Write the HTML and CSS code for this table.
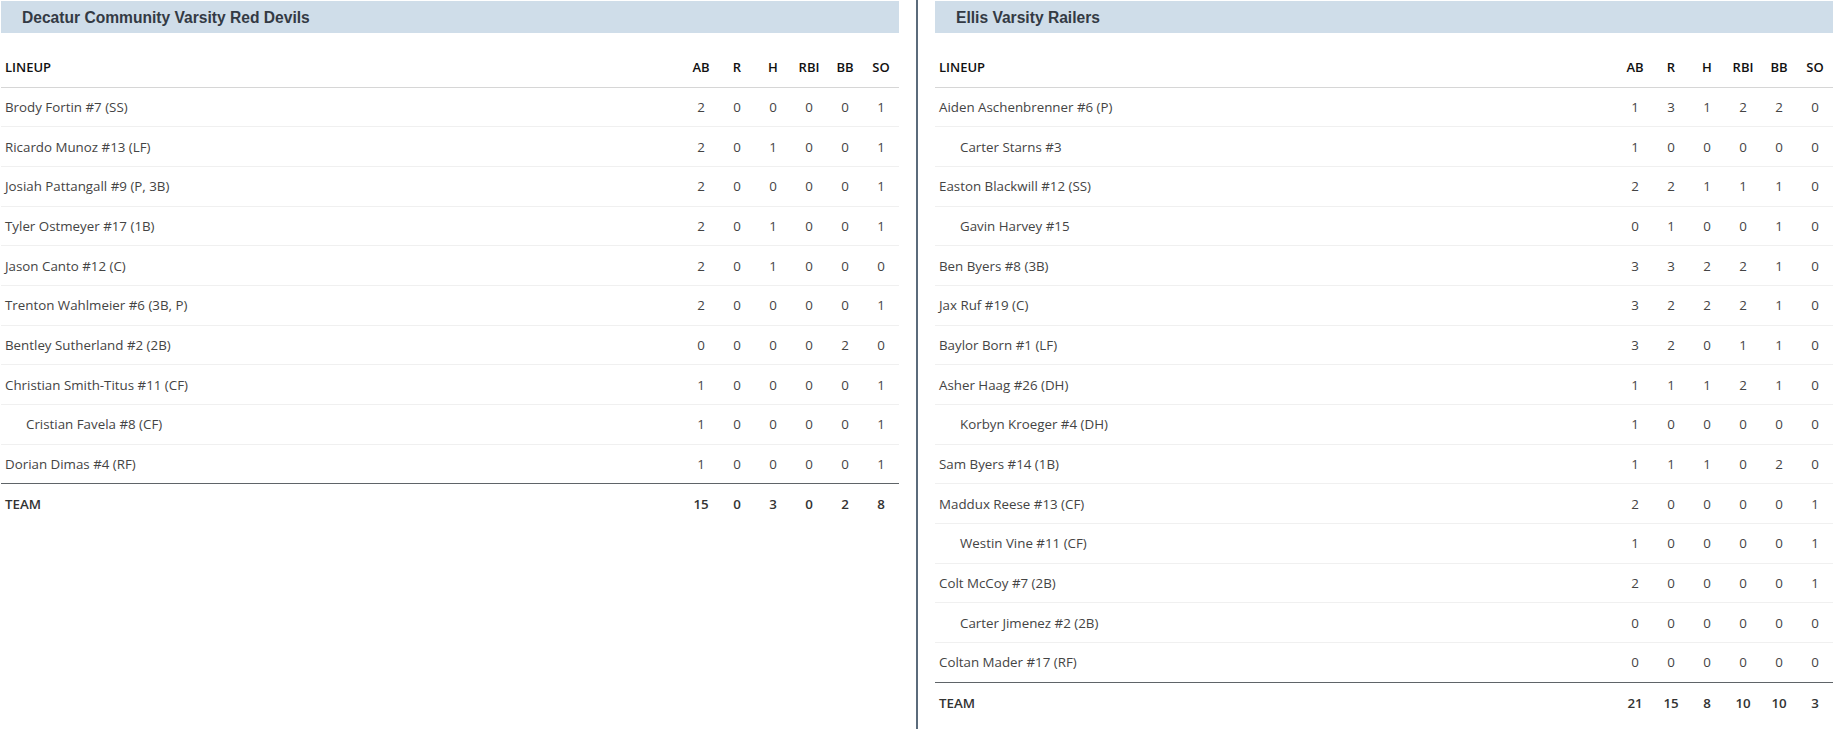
FILE: index.html
```html
<!DOCTYPE html>
<html>
<head>
<meta charset="utf-8">
<link rel="stylesheet" href="styles.css">
</head>
<body>
<div class="boxscore">
  <section class="team">
    <h2 class="team-name">Decatur Community Varsity Red Devils</h2>
    <table class="lineup">
      <thead>
        <tr><th class="name">LINEUP</th><th>AB</th><th>R</th><th>H</th><th>RBI</th><th>BB</th><th>SO</th></tr>
      </thead>
      <tbody>
        <tr><td class="name">Brody Fortin #7 (SS)</td><td>2</td><td>0</td><td>0</td><td>0</td><td>0</td><td>1</td></tr>
        <tr><td class="name">Ricardo Munoz #13 (LF)</td><td>2</td><td>0</td><td>1</td><td>0</td><td>0</td><td>1</td></tr>
        <tr><td class="name">Josiah Pattangall #9 (P, 3B)</td><td>2</td><td>0</td><td>0</td><td>0</td><td>0</td><td>1</td></tr>
        <tr><td class="name">Tyler Ostmeyer #17 (1B)</td><td>2</td><td>0</td><td>1</td><td>0</td><td>0</td><td>1</td></tr>
        <tr><td class="name">Jason Canto #12 (C)</td><td>2</td><td>0</td><td>1</td><td>0</td><td>0</td><td>0</td></tr>
        <tr><td class="name">Trenton Wahlmeier #6 (3B, P)</td><td>2</td><td>0</td><td>0</td><td>0</td><td>0</td><td>1</td></tr>
        <tr><td class="name">Bentley Sutherland #2 (2B)</td><td>0</td><td>0</td><td>0</td><td>0</td><td>2</td><td>0</td></tr>
        <tr><td class="name">Christian Smith-Titus #11 (CF)</td><td>1</td><td>0</td><td>0</td><td>0</td><td>0</td><td>1</td></tr>
        <tr><td class="name sub">Cristian Favela #8 (CF)</td><td>1</td><td>0</td><td>0</td><td>0</td><td>0</td><td>1</td></tr>
        <tr><td class="name">Dorian Dimas #4 (RF)</td><td>1</td><td>0</td><td>0</td><td>0</td><td>0</td><td>1</td></tr>
      </tbody>
      <tfoot>
        <tr><td class="name">TEAM</td><td>15</td><td>0</td><td>3</td><td>0</td><td>2</td><td>8</td></tr>
      </tfoot>
    </table>
  </section>
  <div class="divider"></div>
  <section class="team">
    <h2 class="team-name">Ellis Varsity Railers</h2>
    <table class="lineup">
      <thead>
        <tr><th class="name">LINEUP</th><th>AB</th><th>R</th><th>H</th><th>RBI</th><th>BB</th><th>SO</th></tr>
      </thead>
      <tbody>
        <tr><td class="name">Aiden Aschenbrenner #6 (P)</td><td>1</td><td>3</td><td>1</td><td>2</td><td>2</td><td>0</td></tr>
        <tr><td class="name sub">Carter Starns #3</td><td>1</td><td>0</td><td>0</td><td>0</td><td>0</td><td>0</td></tr>
        <tr><td class="name">Easton Blackwill #12 (SS)</td><td>2</td><td>2</td><td>1</td><td>1</td><td>1</td><td>0</td></tr>
        <tr><td class="name sub">Gavin Harvey #15</td><td>0</td><td>1</td><td>0</td><td>0</td><td>1</td><td>0</td></tr>
        <tr><td class="name">Ben Byers #8 (3B)</td><td>3</td><td>3</td><td>2</td><td>2</td><td>1</td><td>0</td></tr>
        <tr><td class="name">Jax Ruf #19 (C)</td><td>3</td><td>2</td><td>2</td><td>2</td><td>1</td><td>0</td></tr>
        <tr><td class="name">Baylor Born #1 (LF)</td><td>3</td><td>2</td><td>0</td><td>1</td><td>1</td><td>0</td></tr>
        <tr><td class="name">Asher Haag #26 (DH)</td><td>1</td><td>1</td><td>1</td><td>2</td><td>1</td><td>0</td></tr>
        <tr><td class="name sub">Korbyn Kroeger #4 (DH)</td><td>1</td><td>0</td><td>0</td><td>0</td><td>0</td><td>0</td></tr>
        <tr><td class="name">Sam Byers #14 (1B)</td><td>1</td><td>1</td><td>1</td><td>0</td><td>2</td><td>0</td></tr>
        <tr><td class="name">Maddux Reese #13 (CF)</td><td>2</td><td>0</td><td>0</td><td>0</td><td>0</td><td>1</td></tr>
        <tr><td class="name sub">Westin Vine #11 (CF)</td><td>1</td><td>0</td><td>0</td><td>0</td><td>0</td><td>1</td></tr>
        <tr><td class="name">Colt McCoy #7 (2B)</td><td>2</td><td>0</td><td>0</td><td>0</td><td>0</td><td>1</td></tr>
        <tr><td class="name sub">Carter Jimenez #2 (2B)</td><td>0</td><td>0</td><td>0</td><td>0</td><td>0</td><td>0</td></tr>
        <tr><td class="name">Coltan Mader #17 (RF)</td><td>0</td><td>0</td><td>0</td><td>0</td><td>0</td><td>0</td></tr>
      </tbody>
      <tfoot>
        <tr><td class="name">TEAM</td><td>21</td><td>15</td><td>8</td><td>10</td><td>10</td><td>3</td></tr>
      </tfoot>
    </table>
  </section>
</div>
</body>
</html>
```

FILE: styles.css
```css
html, body {
  margin: 0;
  padding: 0;
  background: #ffffff;
}

body {
  font-family: "Open Sans", "Liberation Sans", sans-serif;
  font-size: 13.33px;
  color: #444;
}

.boxscore {
  display: flex;
  align-items: stretch;
  min-height: 729px;
  padding: 1px 12px 0 1px;
  box-sizing: border-box;
}

.team {
  width: 898px;
  flex: 0 0 898px;
}

.divider {
  width: 2px;
  flex: 0 0 2px;
  margin: -1px 17px 0 17px;
  background: #5b6b7b;
}

.team-name {
  margin: 0;
  height: 32px;
  line-height: 34px;
  padding: 0 0 0 21px;
  background: #cfdde9;
  font-family: "Liberation Sans", Arial, sans-serif;
  font-weight: bold;
  font-size: 15.6px;
  color: #333a44;
}

.lineup {
  width: 100%;
  margin-top: 14px;
  border-collapse: collapse;
  table-layout: fixed;
}

.lineup th,
.lineup td {
  width: 36px;
  padding: 0;
  text-align: center;
  white-space: nowrap;
}

.lineup th.name,
.lineup td.name {
  width: auto;
  text-align: left;
  padding-left: 4px;
}

.lineup td.sub {
  padding-left: 25px;
}

.lineup thead tr {
  height: 40px;
}

.lineup th {
  font-weight: 600;
  color: #111;
  font-size: 13px;
  border-bottom: 1px solid #d6d6d6;
}

.lineup tbody tr {
  height: 39.7px;
}

.lineup tbody td {
  border-bottom: 1px solid #f0f0f0;
}

.lineup tbody tr:last-child td {
  border-bottom: 1px solid #5f6468;
}

.lineup tfoot tr {
  height: 40px;
}

.lineup tfoot td {
  font-weight: 600;
  color: #333;
}
```
